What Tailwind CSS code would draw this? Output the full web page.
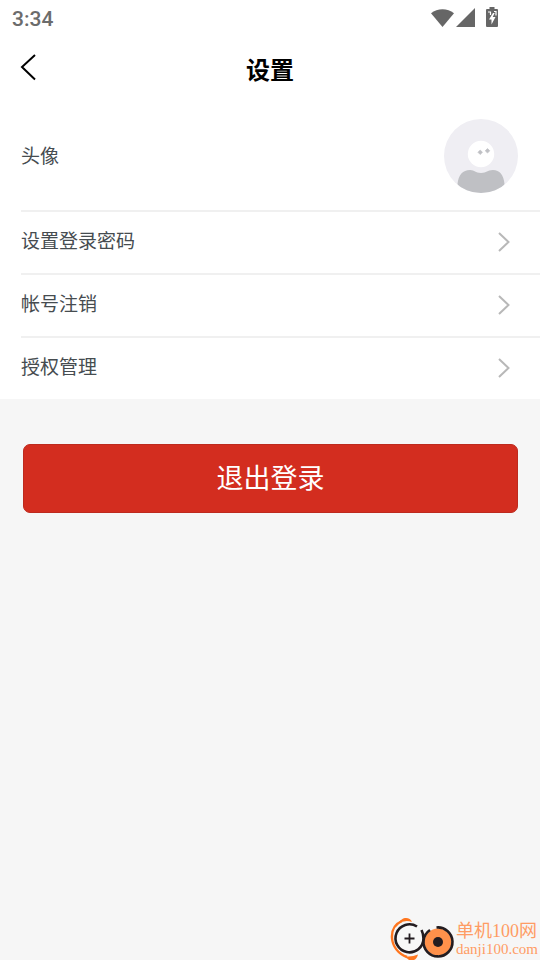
<!DOCTYPE html>
<html lang="zh-CN">
<head>
<meta charset="utf-8">
<meta name="viewport" content="width=device-width, initial-scale=1">
<title>设置</title>
<script src="https://cdn.jsdelivr.net/npm/@tailwindcss/browser@4"></script>
</head>
<body class="flex min-h-screen flex-col bg-[#f6f6f6] font-['Noto_Sans_CJK_SC',sans-serif] text-[#464c50]">
<div class="flex h-[38px] items-center justify-between bg-white pl-3 pr-[42px] text-[#666]">
  <span class="font-[Roboto,sans-serif] text-[21px] leading-6 font-medium text-[#6c6c6c]">3:34</span>
  <svg class="mb-0.5 h-[22px] w-[68px]" viewBox="0 0 68 22" fill="currentColor" aria-hidden="true">
    <path d="M1 6.200C7.500.8 17.500.8 24 6.200L12.500 20Z"/>
    <path d="M45 1V20H26Z"/>
    <path d="M59.500 0h5v2h2.500q1 0 1 1v16q0 1-1 1h-10q-1 0-1-1V3q0-1 1-1h2.500Z"/>
    <path d="M63 6 59 12.500h2.500v5l4-7.500h-2.800l2-4Z" fill="#fff"/>
    <path d="M58 5H60.500V8M64 4.500h2v4" fill="none" stroke="#fff" stroke-width="1.200"/>
  </svg>
</div>
<header class="grid h-16 grid-cols-[60px_1fr_60px] items-center bg-white text-black">
  <button type="button" aria-label="返回" class="flex h-16 items-center pl-5 pb-1.5">
    <svg class="h-[28px] w-4" viewBox="0 0 16 28" fill="none" stroke="currentColor" stroke-width="2" aria-hidden="true"><path d="M15 2 2 14 15 26.500"/></svg>
  </button>
  <h1 class="pb-0.5 text-center text-[24px] leading-8 font-bold">设置</h1>
</header>
<main>
  <ul class="bg-white text-[19px] leading-7">
    <li class="pl-[21px]">
      <button type="button" class="flex h-[108px] w-full items-center justify-between pr-[22px]">
        <span class="pb-0.5">头像</span>
        <svg class="size-[74px]" viewBox="0 0 74 74" role="img" aria-label="头像">
          <clipPath id="disc"><circle cx="37" cy="37" r="37"/></clipPath>
          <g clip-path="url(#disc)">
            <path fill="#efeef3" d="M0 0h74v74H0z"/>
            <path fill="#bfc0c4" d="M13.500 74V65Q15 51 26 51C31 51 31 54 37 54S43 51 49 51Q59 51 60.500 65V74Z"/>
          </g>
          <circle cx="37" cy="35" r="13.200" fill="#fff"/>
          <path fill="#bfc0c4" stroke="#bfc0c4" stroke-width=".6" d="m36.200 31 2.300 2.300-2.300 2.300-2.300-2.300ZM43.500 29.500l2.300 2.300-2.300 2.300-2.300-2.300Z"/>
        </svg>
      </button>
    </li>
    <li class="pl-[21px]">
      <button type="button" class="flex h-[63px] w-full items-center justify-between border-t-2 border-[#f0f0f0] pr-[30px] pb-0.5">
        <span class="pb-1">设置登录密码</span>
        <svg class="h-5 w-3" viewBox="0 0 12 20" fill="none" stroke="#b8b8b8" stroke-width="2" aria-hidden="true"><path d="m1 1 9.500 9L1 19"/></svg>
      </button>
    </li>
    <li class="pl-[21px]">
      <button type="button" class="flex h-[63px] w-full items-center justify-between border-t-2 border-[#f0f0f0] pr-[30px] pb-0.5">
        <span class="pb-1">帐号注销</span>
        <svg class="h-5 w-3" viewBox="0 0 12 20" fill="none" stroke="#b8b8b8" stroke-width="2" aria-hidden="true"><path d="m1 1 9.500 9L1 19"/></svg>
      </button>
    </li>
    <li class="pl-[21px]">
      <button type="button" class="flex h-[63px] w-full items-center justify-between border-t-2 border-[#f0f0f0] pr-[30px] pb-0.5">
        <span class="pb-1">授权管理</span>
        <svg class="h-5 w-3" viewBox="0 0 12 20" fill="none" stroke="#b8b8b8" stroke-width="2" aria-hidden="true"><path d="m1 1 9.500 9L1 19"/></svg>
      </button>
    </li>
  </ul>
  <div class="pt-[45px] pr-[22px] pl-[23px]">
    <button type="button" class="h-[69px] w-full rounded-[7px] border border-[#bd2a1e] bg-[#d32d1f] pb-1 text-[27px] leading-9 text-white">退出登录</button>
  </div>
</main>
<footer class="mt-auto flex items-end justify-end gap-px pr-[2px]">
  <svg class="h-[44px] w-[65px]" viewBox="0 0 65 44" fill="none" aria-hidden="true">
    <path d="M12 5C5 8 1.500 14 2 22S8 38 17 41" stroke="#ff761f" stroke-width="2.400"/>
    <path d="M8 8C12 0 20 1 22 6Q15 3 8 8ZM14 40Q21 41.500 28 38.500 26 46 19 44Z" fill="#ff761f"/>
    <circle cx="19.500" cy="22.500" r="13" fill="#f8f8f8"/>
    <path d="M27 10.500A14 14 0 1 0 33.500 22.500Q33.500 18 31.500 14" stroke="#231c20" stroke-width="2.600"/>
    <path d="M19.500 17.500v10M14.500 22.500h10" stroke="#231c20" stroke-width="1.800"/>
    <circle cx="48" cy="26" r="13.500" fill="#ff914b"/>
    <path d="M46.500 11.500A14.500 14.500 0 1 1 33.500 25Q34 18 40 14" stroke="#231c20" stroke-width="2.600"/>
    <circle cx="48" cy="26" r="5" fill="#231c20"/>
  </svg>
  <div class="pb-[3px] text-[#ff9c64]">
    <p class="font-['Liberation_Serif','Noto_Sans_CJK_SC',serif] text-[18px] leading-5">单机100网</p>
    <p class="font-['Liberation_Serif',serif] text-[15px] leading-4">danji100.com</p>
  </div>
</footer>
</body>
</html>
